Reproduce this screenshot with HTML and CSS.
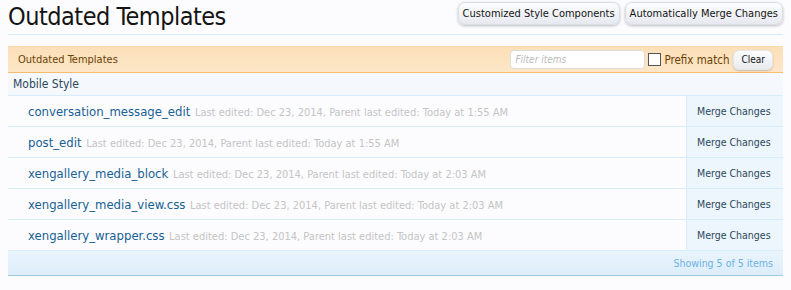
FILE: index.html
```html
<!DOCTYPE html>
<html>
<head>
<meta charset="utf-8">
<link rel="stylesheet" href="styles.css">
</head>
<body>
<div class="titleBar">
  <h1>Outdated Templates</h1>
  <div class="topCtrls">
    <a class="button">Customized Style Components</a>
    <a class="button">Automatically Merge Changes</a>
  </div>
</div>
<div class="section">
  <div class="listHeader">
    <span class="headTitle">Outdated Templates</span>
    <div class="filterCtrls">
      <span class="filterInput">Filter items</span>
      <span class="checkbox"></span>
      <span class="prefix">Prefix match</span>
      <span class="clearBtn">Clear</span>
    </div>
  </div>
  <div class="groupHead">Mobile Style</div>
  <div class="row">
    <div class="main"><a class="name">conversation_message_edit</a> <span class="meta">Last edited: Dec 23, 2014, Parent last edited: Today at 1:55 AM</span></div>
    <div class="action">Merge Changes</div>
  </div>
  <div class="row">
    <div class="main"><a class="name">post_edit</a> <span class="meta">Last edited: Dec 23, 2014, Parent last edited: Today at 1:55 AM</span></div>
    <div class="action">Merge Changes</div>
  </div>
  <div class="row">
    <div class="main"><a class="name">xengallery_media_block</a> <span class="meta">Last edited: Dec 23, 2014, Parent last edited: Today at 2:03 AM</span></div>
    <div class="action">Merge Changes</div>
  </div>
  <div class="row">
    <div class="main"><a class="name">xengallery_media_view.css</a> <span class="meta">Last edited: Dec 23, 2014, Parent last edited: Today at 2:03 AM</span></div>
    <div class="action">Merge Changes</div>
  </div>
  <div class="row">
    <div class="main"><a class="name">xengallery_wrapper.css</a> <span class="meta">Last edited: Dec 23, 2014, Parent last edited: Today at 2:03 AM</span></div>
    <div class="action">Merge Changes</div>
  </div>
  <div class="footer">Showing 5 of 5 items</div>
</div>
</body>
</html>
```
FILE: styles.css
```css
html, body { margin: 0; padding: 0; }
body {
  background: #fcfcff;
  padding: 0 8px;
  font-family: "DejaVu Sans Condensed", "DejaVu Sans", sans-serif;
  color: #141414;
}
.titleBar {
  display: flex;
  justify-content: space-between;
  align-items: flex-start;
  border-bottom: 1px solid #d7edfc;
  height: 34px;
  margin-bottom: 11px;
}
h1 {
  margin: 0;
  font-size: 25px;
  font-weight: normal;
  line-height: 34px;
  color: #141414;
  letter-spacing: -0.5px;
}
.topCtrls { display: flex; gap: 5px; padding-top: 2px; }
.button {
  font-size: 11px;
  color: #141414;
  height: 21px;
  line-height: 21px;
  padding: 0 4px;
  border-radius: 7px;
  border: 1px solid #d9dde4;
  background: linear-gradient(#fdfdfe, #e6e9ef);
  box-shadow: 0 1px 3px rgba(0,0,0,0.25);
}
.section { width: 775px; }
.listHeader {
  display: flex;
  justify-content: space-between;
  align-items: center;
  height: 25px;
  background: linear-gradient(#fbe0b8, #fde6c8);
  border-bottom: 1px solid #f9bc6d;
  border-top: 1px solid #fcd9a8;
}
.headTitle { font-size: 11px; color: #6d3f03; padding-left: 10px; }
.filterCtrls { display: flex; align-items: center; padding-right: 10px; }
.filterInput {
  width: 129px; height: 17px; line-height: 17px;
  border: 1px solid #ddd; border-radius: 4px; background: #fff;
  font-size: 10px; font-style: italic; color: #bbb; padding-left: 4px;
}
.checkbox {
  width: 11px; height: 11px; border: 1px solid #555; background: #fff;
  margin-left: 3px; margin-right: 3px;
}
.prefix { font-size: 11.5px; color: #6d3f03; }
.clearBtn {
  margin-left: 4px;
  font-size: 10px; color: #141414;
  height: 18px; line-height: 18px; padding: 0 7px;
  border-radius: 6px; border: 1px solid #e6e6e6;
  background: linear-gradient(#fdfdfe, #e8eaef);
  box-shadow: 0 1px 2px rgba(0,0,0,0.2);
}
.groupHead {
  height: 22px; line-height: 22px;
  font-size: 12px; color: #2b485c; font-weight: normal;
  padding-left: 5px;
  background: #f5f9fd;
  border-bottom: 1px solid #d7edfc;
}
.row {
  display: flex;
  height: 30px;
  border-bottom: 1px solid #d7edfc;
  background: #fcfcff;
}
.main { flex: 1; padding-left: 20px; line-height: 30px; white-space: nowrap; }
.name { font-size: 13px; color: #176093; }
.meta { font-size: 11px; color: #c4c4c4; }
.action {
  width: 86px; padding-left: 10px;
  border-left: 1px solid #d7edfc;
  background: #eef6fd;
  font-size: 10.5px; color: #2b485c;
  line-height: 30px;
}
.footer {
  height: 24px; line-height: 24px;
  text-align: right;
  padding-right: 10px;
  font-size: 10.5px; color: #6cb2e4;
  background: linear-gradient(#eaf4fc, #dcedfa);
  border-bottom: 1px solid #a5cae4;
}
```
